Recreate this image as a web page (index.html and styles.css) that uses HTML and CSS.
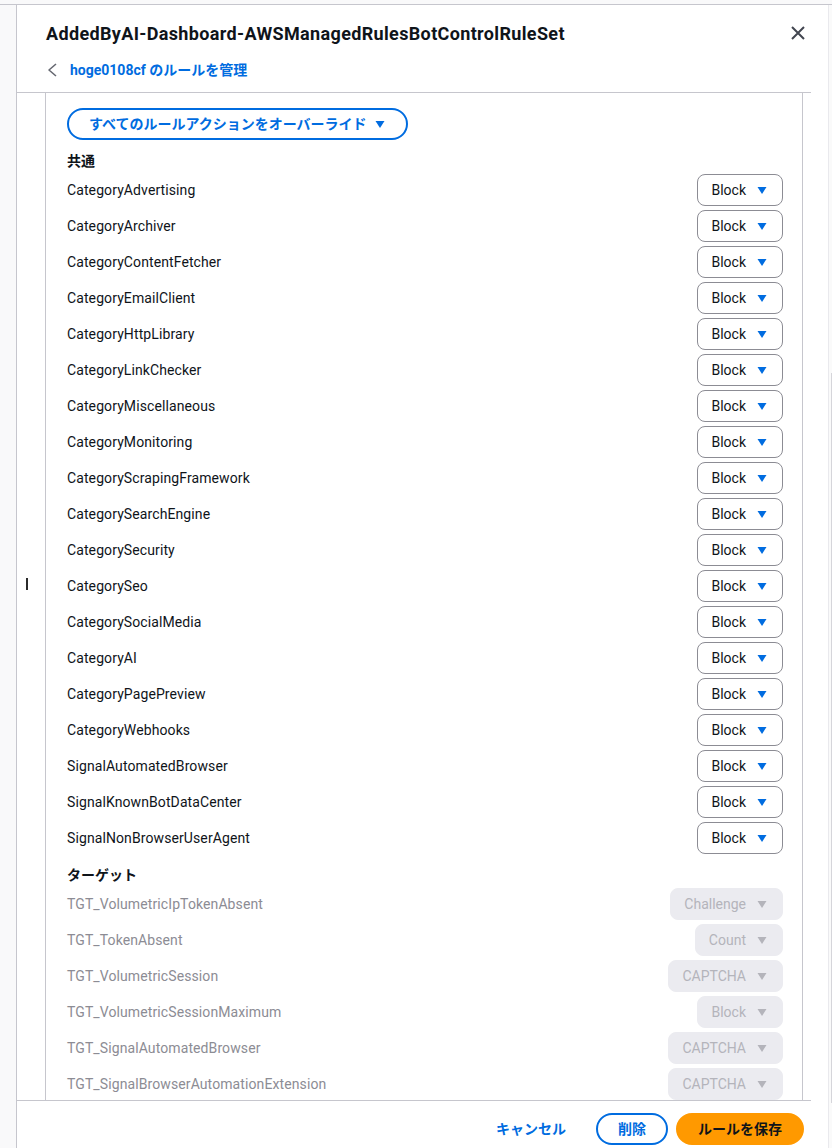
FILE: index.html
```html
<!DOCTYPE html>
<html lang="ja">
<head>
<meta charset="utf-8">
<title>AddedByAI-Dashboard-AWSManagedRulesBotControlRuleSet</title>
<link rel="stylesheet" href="styles.css">
</head>
<body>
<div class="frame">
  <div class="gutter"></div>
  <div class="panel">
    <header class="header">
      <div class="title-row">
        <h1 class="title">AddedByAI-Dashboard-AWSManagedRulesBotControlRuleSet</h1>
        <button class="close" aria-label="閉じる">
          <svg width="16" height="16" viewBox="0 0 16 16"><path d="M2 2l12 12M14 2L2 14" stroke="#424650" stroke-width="2" fill="none"/></svg>
        </button>
      </div>
      <div class="back-row">
        <svg class="chev" width="16" height="16" viewBox="0 0 16 16"><path d="M12 2L5 8l7 6" stroke="#656871" stroke-width="1.6" fill="none" stroke-linejoin="round"/></svg>
        <a class="back-link" href="#">hoge0108cf のルールを管理</a>
      </div>
    </header>

    <div class="content">
      <div class="inner">
        <button class="override">すべてのルールアクションをオーバーライド<svg class="caret" width="16" height="16" viewBox="0 0 16 16"><path d="M3.5 5h9L8 12z" fill="#006ce0"/></svg></button>

        <h2 class="group">共通</h2>
        <div class="rows">
          <div class="row"><span class="name">CategoryAdvertising</span><button class="sel">Block<svg class="caret" width="16" height="16" viewBox="0 0 16 16"><path d="M3.5 5h9L8 12z"/></svg></button></div>
          <div class="row"><span class="name">CategoryArchiver</span><button class="sel">Block<svg class="caret" width="16" height="16" viewBox="0 0 16 16"><path d="M3.5 5h9L8 12z"/></svg></button></div>
          <div class="row"><span class="name">CategoryContentFetcher</span><button class="sel">Block<svg class="caret" width="16" height="16" viewBox="0 0 16 16"><path d="M3.5 5h9L8 12z"/></svg></button></div>
          <div class="row"><span class="name">CategoryEmailClient</span><button class="sel">Block<svg class="caret" width="16" height="16" viewBox="0 0 16 16"><path d="M3.5 5h9L8 12z"/></svg></button></div>
          <div class="row"><span class="name">CategoryHttpLibrary</span><button class="sel">Block<svg class="caret" width="16" height="16" viewBox="0 0 16 16"><path d="M3.5 5h9L8 12z"/></svg></button></div>
          <div class="row"><span class="name">CategoryLinkChecker</span><button class="sel">Block<svg class="caret" width="16" height="16" viewBox="0 0 16 16"><path d="M3.5 5h9L8 12z"/></svg></button></div>
          <div class="row"><span class="name">CategoryMiscellaneous</span><button class="sel">Block<svg class="caret" width="16" height="16" viewBox="0 0 16 16"><path d="M3.5 5h9L8 12z"/></svg></button></div>
          <div class="row"><span class="name">CategoryMonitoring</span><button class="sel">Block<svg class="caret" width="16" height="16" viewBox="0 0 16 16"><path d="M3.5 5h9L8 12z"/></svg></button></div>
          <div class="row"><span class="name">CategoryScrapingFramework</span><button class="sel">Block<svg class="caret" width="16" height="16" viewBox="0 0 16 16"><path d="M3.5 5h9L8 12z"/></svg></button></div>
          <div class="row"><span class="name">CategorySearchEngine</span><button class="sel">Block<svg class="caret" width="16" height="16" viewBox="0 0 16 16"><path d="M3.5 5h9L8 12z"/></svg></button></div>
          <div class="row"><span class="name">CategorySecurity</span><button class="sel">Block<svg class="caret" width="16" height="16" viewBox="0 0 16 16"><path d="M3.5 5h9L8 12z"/></svg></button></div>
          <div class="row"><span class="name">CategorySeo</span><button class="sel">Block<svg class="caret" width="16" height="16" viewBox="0 0 16 16"><path d="M3.5 5h9L8 12z"/></svg></button></div>
          <div class="row"><span class="name">CategorySocialMedia</span><button class="sel">Block<svg class="caret" width="16" height="16" viewBox="0 0 16 16"><path d="M3.5 5h9L8 12z"/></svg></button></div>
          <div class="row"><span class="name">CategoryAI</span><button class="sel">Block<svg class="caret" width="16" height="16" viewBox="0 0 16 16"><path d="M3.5 5h9L8 12z"/></svg></button></div>
          <div class="row"><span class="name">CategoryPagePreview</span><button class="sel">Block<svg class="caret" width="16" height="16" viewBox="0 0 16 16"><path d="M3.5 5h9L8 12z"/></svg></button></div>
          <div class="row"><span class="name">CategoryWebhooks</span><button class="sel">Block<svg class="caret" width="16" height="16" viewBox="0 0 16 16"><path d="M3.5 5h9L8 12z"/></svg></button></div>
          <div class="row"><span class="name">SignalAutomatedBrowser</span><button class="sel">Block<svg class="caret" width="16" height="16" viewBox="0 0 16 16"><path d="M3.5 5h9L8 12z"/></svg></button></div>
          <div class="row"><span class="name">SignalKnownBotDataCenter</span><button class="sel">Block<svg class="caret" width="16" height="16" viewBox="0 0 16 16"><path d="M3.5 5h9L8 12z"/></svg></button></div>
          <div class="row"><span class="name">SignalNonBrowserUserAgent</span><button class="sel">Block<svg class="caret" width="16" height="16" viewBox="0 0 16 16"><path d="M3.5 5h9L8 12z"/></svg></button></div>
        </div>

        <h2 class="group">ターゲット</h2>
        <div class="rows">
          <div class="row off"><span class="name">TGT_VolumetricIpTokenAbsent</span><button class="sel" disabled>Challenge<svg class="caret" width="16" height="16" viewBox="0 0 16 16"><path d="M3.5 5h9L8 12z"/></svg></button></div>
          <div class="row off"><span class="name">TGT_TokenAbsent</span><button class="sel" disabled>Count<svg class="caret" width="16" height="16" viewBox="0 0 16 16"><path d="M3.5 5h9L8 12z"/></svg></button></div>
          <div class="row off"><span class="name">TGT_VolumetricSession</span><button class="sel" disabled>CAPTCHA<svg class="caret" width="16" height="16" viewBox="0 0 16 16"><path d="M3.5 5h9L8 12z"/></svg></button></div>
          <div class="row off"><span class="name">TGT_VolumetricSessionMaximum</span><button class="sel" disabled>Block<svg class="caret" width="16" height="16" viewBox="0 0 16 16"><path d="M3.5 5h9L8 12z"/></svg></button></div>
          <div class="row off"><span class="name">TGT_SignalAutomatedBrowser</span><button class="sel" disabled>CAPTCHA<svg class="caret" width="16" height="16" viewBox="0 0 16 16"><path d="M3.5 5h9L8 12z"/></svg></button></div>
          <div class="row off"><span class="name">TGT_SignalBrowserAutomationExtension</span><button class="sel" disabled>CAPTCHA<svg class="caret" width="16" height="16" viewBox="0 0 16 16"><path d="M3.5 5h9L8 12z"/></svg></button></div>
        </div>
      </div>
    </div>

    <footer class="footer">
      <button class="btn link">キャンセル</button>
      <button class="btn normal">削除</button>
      <button class="btn primary">ルールを保存</button>
    </footer>
  </div>
  <div class="scroll"><div class="thumb"></div></div>
</div>
<div class="cursor"></div>
</body>
</html>
```

FILE: styles.css
```css
* { box-sizing: border-box; }

html, body {
  margin: 0;
  padding: 0;
  height: 1148px;
  overflow: hidden;
}

body {
  background: #f9f9fa;
  font-family: Roboto, "Noto Sans CJK JP", sans-serif;
  font-size: 14px;
  color: #0f141a;
  position: relative;
}

.frame {
  margin-top: 4px;
  border-top: 1px solid #c6c6cd;
  display: flex;
  height: 1144px;
}

.gutter {
  width: 16px;
  flex: none;
}

.panel {
  width: 813px;
  flex: none;
  background: #ffffff;
  border-left: 1px solid #c6c6cd;
  border-right: 1px solid #e9e9ed;
  display: flex;
  flex-direction: column;
  overflow: hidden;
}

.scroll {
  flex: 1;
  background: #fafafa;
  display: flex;
  justify-content: flex-end;
}

.thumb {
  width: 1px;
  height: 730px;
  margin-top: 368px;
  background: #d5d5da;
}

/* Header */
.header {
  padding: 18px 22px 12px 29px;
}

.title-row {
  display: flex;
  align-items: center;
  justify-content: space-between;
}

.title {
  margin: 0;
  font-size: 18px;
  line-height: 22px;
  font-weight: 700;
  letter-spacing: 0.35px;
  color: #0f141a;
}

.close {
  border: 0;
  background: none;
  padding: 0;
  width: 16px;
  height: 16px;
  display: flex;
  margin-top: -3px;
}

.back-row {
  display: flex;
  align-items: center;
  gap: 10px;
  margin-top: 15px;
  height: 20px;
  margin-left: -2px;
}

.chev { flex: none; }

.back-link {
  color: #006ce0;
  font-weight: 700;
  font-size: 14px;
  line-height: 20px;
  text-decoration: none;
}

/* Content */
.content {
  flex: none;
  height: 1009px;
  width: 794px;
  border-top: 1px solid #c6c6cd;
  border-bottom: 1px solid #c6c6cd;
  display: flex;
  overflow: hidden;
}

.inner {
  flex: 1;
  margin-left: 28px;
  margin-right: 8px;
  border-left: 1px solid #c6c6cd;
  border-right: 1px solid #c6c6cd;
  padding: 15px 20px 0 21px;
  overflow: hidden;
}

.override {
  display: inline-flex;
  align-items: center;
  height: 32px;
  padding: 0 18px 0 20px;
  border: 2px solid #006ce0;
  border-radius: 20px;
  background: #ffffff;
  color: #006ce0;
  font-family: inherit;
  font-size: 14px;
  font-weight: 700;
  line-height: 20px;
}

.override .caret {
  margin-left: 5px;
}

.group {
  margin: 0;
  padding-top: 10px;
  margin-bottom: 2px;
  font-size: 14px;
  line-height: 22px;
  font-weight: 700;
  color: #0f141a;
}

.rows {
  display: flex;
  flex-direction: column;
  gap: 4px;
}

.row {
  height: 32px;
  display: flex;
  align-items: center;
  justify-content: space-between;
}

.name {
  font-size: 14px;
  line-height: 20px;
  letter-spacing: 0.1px;
  color: #0f141a;
}

.row.off .name {
  color: #8c8c94;
}

.sel {
  display: inline-flex;
  align-items: center;
  height: 32px;
  padding: 0 12px 0 13px;
  border: 1px solid #8c8c94;
  border-radius: 8px;
  background: #ffffff;
  font-family: inherit;
  font-size: 14px;
  line-height: 20px;
  color: #0f141a;
  margin-right: -1px;
}

.sel .caret {
  margin-left: 8px;
  fill: #006ce0;
}

.sel:disabled {
  background: #ebebf0;
  border-color: #ebebf0;
  color: #b4b4bb;
}

.sel:disabled .caret {
  fill: #b4b4bb;
}

.caret { flex: none; }

/* Footer */
.footer {
  display: flex;
  justify-content: flex-end;
  gap: 8px;
  padding: 12px 24px 0 0;
}

.btn {
  height: 32px;
  padding: 0 20px;
  border: 2px solid transparent;
  border-radius: 20px;
  font-family: inherit;
  font-size: 14px;
  font-weight: 700;
  line-height: 20px;
  background: none;
}

.btn.link {
  color: #006ce0;
}

.btn.normal {
  border-color: #006ce0;
  color: #006ce0;
  background: #ffffff;
}

.btn.primary {
  background: #ff9900;
  border-color: #ff9900;
  color: #0f141a;
}

.cursor {
  position: absolute;
  left: 26px;
  top: 578px;
  width: 2px;
  height: 12px;
  background: #2b2b2b;
}
```
